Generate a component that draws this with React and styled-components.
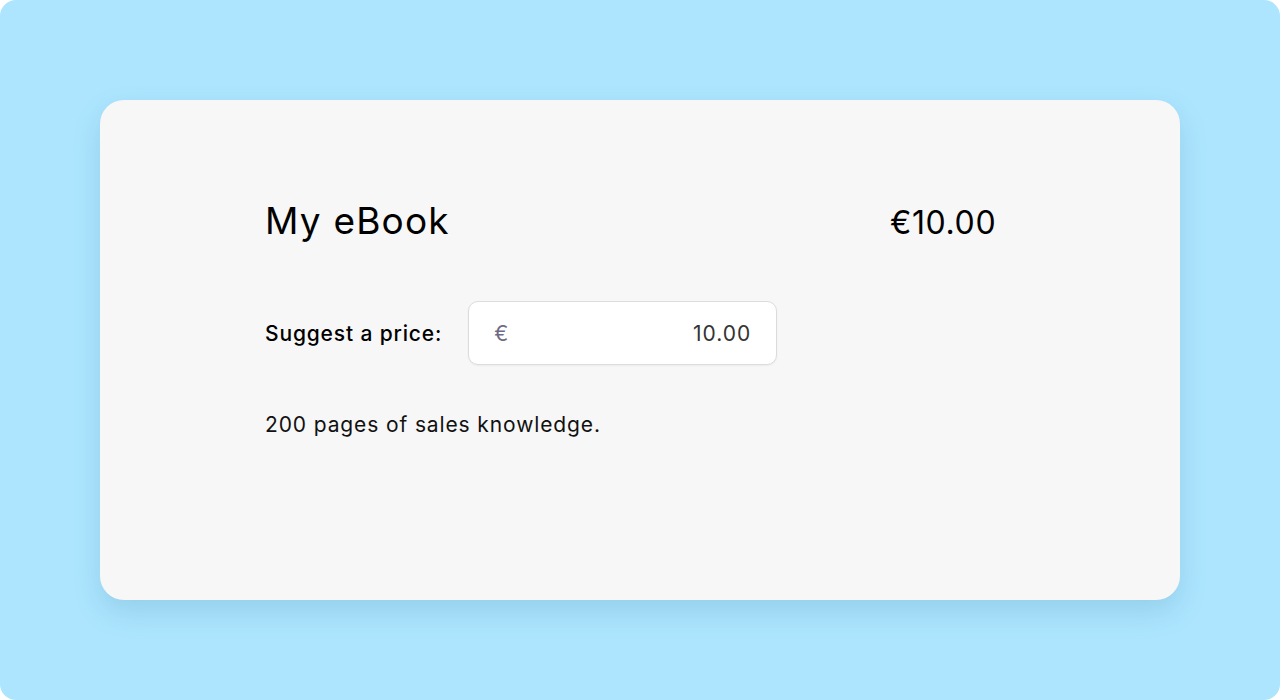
import styled, { createGlobalStyle } from "styled-components";

const GlobalStyle = createGlobalStyle`
  html, body {
    margin: 0;
    padding: 0;
    background: #ffffff;
  }
  body {
    font-family: Inter, "Noto Sans", sans-serif;
    color: #111111;
  }
`;

const Frame = styled.div`
  box-sizing: border-box;
  height: 700px;
  padding: 100px;
  background: #ade5fe;
  border-radius: 16px;
`;

const Card = styled.div`
  box-sizing: border-box;
  height: 500px;
  padding: 98px 185px 0 165px;
  background: #f7f7f7;
  border-radius: 24px;
  box-shadow: 0 12px 28px rgba(40, 110, 150, 0.18);
`;

const Header = styled.div`
  display: flex;
  justify-content: space-between;
  align-items: baseline;
`;

const Title = styled.h1`
  margin: 0;
  font-size: 37px;
  font-weight: 400;
  letter-spacing: 1.2px;
  line-height: normal;
  color: #000;
`;

const Price = styled.span`
  font-size: 32px;
  font-weight: 400;
  letter-spacing: 0.6px;
  margin-right: -1.2px;
  color: #000;
`;

const SuggestRow = styled.div`
  display: flex;
  align-items: center;
  gap: 26px;
  margin-top: 58px;
`;

const Label = styled.label`
  font-size: 21px;
  font-weight: 500;
  letter-spacing: 0.85px;
  color: #000;
`;

const InputBox = styled.div`
  box-sizing: border-box;
  display: flex;
  align-items: center;
  width: 309px;
  height: 64px;
  padding: 0 25px;
  background: #ffffff;
  border: 1px solid #dcdcdc;
  border-radius: 10px;
  box-shadow: 0 1px 2px rgba(0, 0, 0, 0.05);
`;

const Currency = styled.span`
  font-size: 21px;
  color: #6e6a85;
`;

const Amount = styled.input`
  flex: 1;
  min-width: 0;
  border: none;
  outline: none;
  background: transparent;
  text-align: right;
  font-family: inherit;
  font-size: 21px;
  letter-spacing: 1px;
  color: #333;
  padding: 0;
`;

const Description = styled.p`
  margin: 47px 0 0;
  font-size: 21px;
  letter-spacing: 0.88px;
  color: #111;
`;

export default function App() {
  return (
    <>
      <GlobalStyle />
      <Frame>
        <Card>
          <Header>
            <Title>My eBook</Title>
            <Price>€10.00</Price>
          </Header>
          <SuggestRow>
            <Label htmlFor="price">Suggest a price:</Label>
            <InputBox>
              <Currency>€</Currency>
              <Amount id="price" defaultValue="10.00" />
            </InputBox>
          </SuggestRow>
          <Description>200 pages of sales knowledge.</Description>
        </Card>
      </Frame>
    </>
  );
}
